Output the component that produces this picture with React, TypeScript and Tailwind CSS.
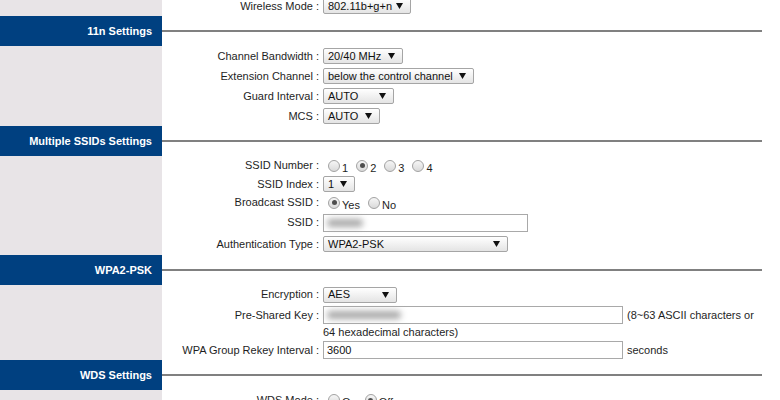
import type { ReactNode } from "react";

function Arrow() {
  return (
    <svg width="7" height="6" viewBox="0 0 7 6" className="shrink-0">
      <path d="M0 0h7L3.5 6z" fill="#111" />
    </svg>
  );
}

function Select({ value, w }: { value: string; w: string }) {
  return (
    <div
      className={`${w} flex h-[16px] items-center justify-between rounded-[2px] border border-[#a5a5a5] bg-linear-to-b from-white to-[#e4e4e4] pl-[4px] pr-[7px] text-[#111]`}
    >
      <span className="whitespace-nowrap">{value}</span>
      <Arrow />
    </div>
  );
}

function TextBox({ w, children }: { w: string; children?: ReactNode }) {
  return (
    <div className={`${w} flex h-[18px] items-center border border-[#a9a9a9] bg-white pl-[3px] text-[#111]`}>
      {children}
    </div>
  );
}

// stands in for the blurred-out values in the screenshot
function Blur({ w }: { w: string }) {
  return <span className={`${w} inline-block h-[8px] rounded-full bg-[#a8a8a8] blur-[3px]`} />;
}

function Radio({ checked, label }: { checked?: boolean; label: string }) {
  return (
    <span className="ml-[5px] mr-[3px] flex items-center">
      <span className="mr-[2px] flex h-[12px] w-[12px] items-center justify-center rounded-full border border-[#a2a2a2] bg-linear-to-b from-[#f6f6f6] to-[#dadada]">
        {checked && <span className="h-[5px] w-[5px] rounded-full bg-[#4e4e4e]" />}
      </span>
      <span className="mt-[5px]">{label}</span>
    </span>
  );
}

function Header({ title }: { title: string }) {
  return (
    <div className="flex h-[30px] shrink-0 items-center">
      <div className="flex h-full w-[162px] shrink-0 items-center justify-end bg-[#004080] pr-[10px] font-bold text-white">
        {title}
      </div>
      <div className="mr-[18px] h-[2px] flex-1 bg-[#808080]" />
    </div>
  );
}

function Row({
  label,
  h,
  extra = "",
  children,
}: {
  label: string;
  h: string;
  extra?: string;
  children: ReactNode;
}) {
  return (
    <div className={`${h} ${extra} flex shrink-0 items-center`}>
      <div className="w-[162px] shrink-0 self-stretch bg-[#e8e4e7]" />
      <div className="w-[157px] shrink-0 whitespace-nowrap text-right">{label} :</div>
      <div className="flex items-center pl-[4px]">{children}</div>
    </div>
  );
}

export default function App() {
  return (
    <div className="flex h-screen flex-col overflow-hidden bg-white font-['Liberation_Sans',Arial,sans-serif] text-[11px] leading-[13px] text-[#1e1e1e]">
      <Row label="Wireless Mode" h="h-[20px]" extra="-mt-[4px]">
        <Select value="802.11b+g+n" w="w-[88px]" />
      </Row>

      <Header title="11n Settings" />
      <Row label="Channel Bandwidth" h="h-[20px]">
        <Select value="20/40 MHz" w="w-[80px]" />
      </Row>
      <Row label="Extension Channel" h="h-[20px]">
        <Select value="below the control channel" w="w-[151px]" />
      </Row>
      <Row label="Guard Interval" h="h-[20px]">
        <Select value="AUTO" w="w-[71px]" />
      </Row>
      <Row label="MCS" h="h-[20px]">
        <Select value="AUTO" w="w-[57px]" />
      </Row>

      <Header title="Multiple SSIDs Settings" />
      <Row label="SSID Number" h="h-[19px]">
        <Radio label="1" />
        <Radio label="2" checked />
        <Radio label="3" />
        <Radio label="4" />
      </Row>
      <Row label="SSID Index" h="h-[18px]">
        <Select value="1" w="w-[32px]" />
      </Row>
      <Row label="Broadcast SSID" h="h-[19px]">
        <Radio label="Yes" checked />
        <Radio label="No" />
      </Row>
      <Row label="SSID" h="h-[21px]">
        <TextBox w="w-[205px]">
          <Blur w="w-[36px]" />
        </TextBox>
      </Row>
      <Row label="Authentication Type" h="h-[22px]">
        <Select value="WPA2-PSK" w="w-[185px]" />
      </Row>

      <Header title="WPA2-PSK" />
      <Row label="Encryption" h="h-[19px]">
        <Select value="AES" w="w-[74px]" />
      </Row>
      <div className="flex h-[36px] shrink-0 items-start">
        <div className="w-[162px] shrink-0 self-stretch bg-[#e8e4e7]" />
        <div className="w-[157px] shrink-0 whitespace-nowrap pt-[5px] text-right">Pre-Shared Key :</div>
        <div className="flex flex-col pl-[4px] pt-[2px]">
          <div className="flex items-center">
            <TextBox w="w-[300px]">
              <Blur w="w-[74px]" />
            </TextBox>
            <span className="ml-[4px] whitespace-nowrap">(8~63 ASCII characters or</span>
          </div>
          <div className="mt-[2px] whitespace-nowrap">64 hexadecimal characters)</div>
        </div>
      </div>
      <Row label="WPA Group Rekey Interval" h="h-[20px]">
        <TextBox w="w-[300px]">3600</TextBox>
        <span className="ml-[4px]">seconds</span>
      </Row>

      <Header title="WDS Settings" />
      <Row label="WDS Mode" h="h-[20px]">
        <Radio label="On" />
        <Radio label="Off" checked />
      </Row>
    </div>
  );
}
